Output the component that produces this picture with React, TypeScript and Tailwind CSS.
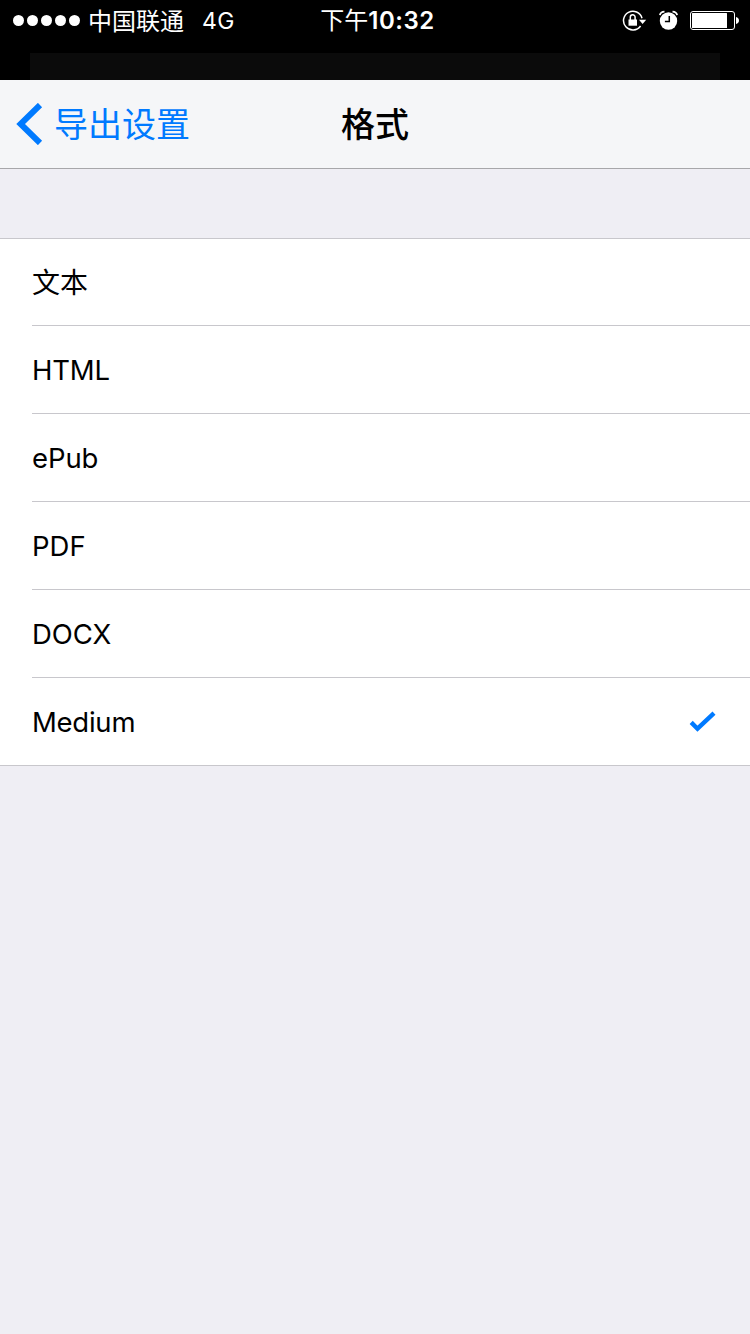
import { useState } from 'react';

const formats = [
  { id: 'text', label: '文本', size: 'text-[28px]' },
  { id: 'html', label: 'HTML', size: 'text-[27.5px] tracking-[-0.2px]' },
  { id: 'epub', label: 'ePub', size: 'text-[27.5px] tracking-[-0.1px]' },
  { id: 'pdf', label: 'PDF', size: 'text-[27.5px]' },
  { id: 'docx', label: 'DOCX', size: 'text-[27.5px] tracking-[-0.1px]' },
  { id: 'medium', label: 'Medium', size: 'text-[27.5px] tracking-[-0.25px]' },
];

function RotationLockIcon() {
  return (
    <svg width="26" height="22" viewBox="0 0 26 22" fill="none">
      <path d="M20 8.2A9.4 9.4 0 1 0 18.6 16" stroke="white" strokeWidth="1.5" />
      <path d="M17 9.7h7.2l-3.6 4.3z" fill="white" />
      <rect x="6.5" y="9.5" width="8.5" height="6.2" fill="white" />
      <path d="M8.3 10V7.2a2.4 2.4 0 0 1 4.8 0V10" stroke="white" strokeWidth="1.5" />
    </svg>
  );
}

function AlarmIcon() {
  return (
    <svg width="20" height="22" viewBox="0 0 20 22" fill="none">
      <circle cx="9.5" cy="11" r="8.7" fill="white" />
      <path d="M0.9 5.2C1.3 3 3 1.8 5.5 1.7" stroke="white" strokeWidth="1.8" />
      <path d="M18.1 5.2C17.7 3 16 1.8 13.5 1.7" stroke="white" strokeWidth="1.8" />
      <path d="M10.3 6v5.5H5.9" stroke="black" strokeWidth="1.5" />
    </svg>
  );
}

function BatteryIcon() {
  return (
    <svg width="49" height="19" viewBox="0 0 49 19" fill="none">
      <rect x="0.5" y="0.5" width="44" height="18" rx="2.5" stroke="white" />
      <rect x="2" y="2" width="35" height="15" rx="0.5" fill="white" />
      <path d="M46 6c1.8.3 3 1.7 3 3.5s-1.2 3.2-3 3.5z" fill="white" />
    </svg>
  );
}

function StatusBar() {
  return (
    <div className="grid h-[53px] grid-cols-[1fr_auto_1fr] items-start text-white">
      <div className="flex h-[41px] items-center pl-[13px]">
        <div className="flex gap-[3px]">
          {[0, 1, 2, 3, 4].map((i) => (
            <span key={i} className="size-[11px] rounded-full bg-white" />
          ))}
        </div>
        <span className="ml-2 pt-0.5 text-[24px]">中国联通</span>
        <span className="ml-[18px] pt-0.5 text-[23px] tracking-[0.3px]">4G</span>
      </div>
      <div className="flex h-[41px] items-center pt-px pl-[5px] text-[24px]">
        <span>下午</span>
        <span className="font-semibold tracking-[0.5px]">10:32</span>
      </div>
      <div className="flex h-[41px] items-center justify-end pr-[11px]">
        <RotationLockIcon />
        <span className="ml-[11px]">
          <AlarmIcon />
        </span>
        <span className="ml-[11px]">
          <BatteryIcon />
        </span>
      </div>
    </div>
  );
}

function NavBar() {
  return (
    <header className="grid h-[89px] grid-cols-[1fr_auto_1fr] items-center border-b border-[#a7a7aa] bg-[#f5f6f8]">
      <button className="flex items-center pl-4 text-[#007aff]">
        <svg width="27" height="42" viewBox="0 0 27 42" fill="none">
          <path d="M24 2L4.6 21 24 40" stroke="currentColor" strokeWidth="6" />
        </svg>
        <span className="ml-[11px] pt-0.5 text-[34px] leading-[44px]">导出设置</span>
      </button>
      <h1 className="pt-0.5 text-[34px] font-medium leading-[44px]">格式</h1>
    </header>
  );
}

export default function App() {
  const [selected, setSelected] = useState('medium');

  return (
    <div className="flex h-[1334px] w-[750px] flex-col overflow-hidden bg-[#efeef4] font-['Inter','Noto_Sans_CJK_SC',sans-serif] text-black">
      <div className="h-20 bg-black">
        <StatusBar />
        {/* Edge of the sheet underneath */}
        <div className="mx-[30px] h-[27px] bg-[#0b0b0b]" />
      </div>
      <NavBar />

      <ul className="mt-[69px] border-y border-[#c8c7cc] bg-white pl-8">
        {formats.map((format) => (
          <li
            key={format.id}
            onClick={() => setSelected(format.id)}
            className="flex h-[88px] items-center justify-between border-b border-[#c8c7cc] pr-[34px] first:h-[87px] last:h-[87px] last:border-b-0"
          >
            <span className={`pt-0.5 ${format.size}`}>{format.label}</span>
            {selected === format.id && (
              <svg width="27" height="22" viewBox="0 0 27 22" fill="none">
                <path d="M2.2 11.4l6.3 6.3L25 2.2" stroke="#007aff" strokeWidth="4.4" />
              </svg>
            )}
          </li>
        ))}
      </ul>
    </div>
  );
}
